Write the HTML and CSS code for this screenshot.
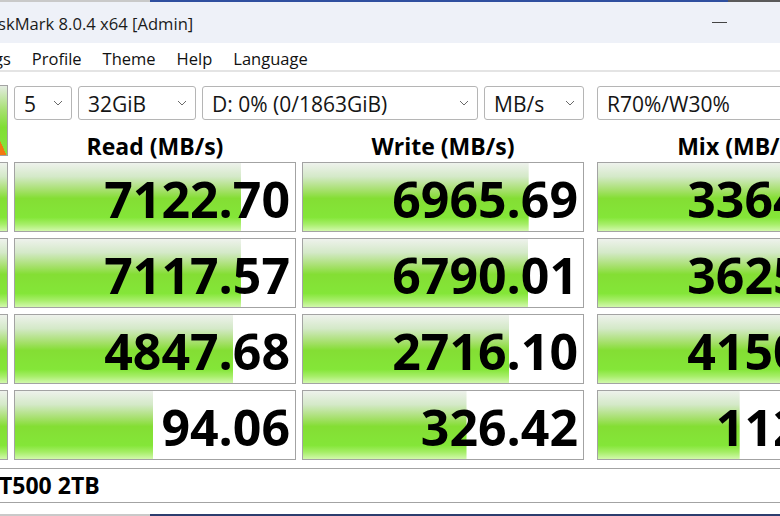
FILE: index.html
```html
<!DOCTYPE html>
<html lang="en">
<head>
    <meta charset="UTF-8">
    <title>CrystalDiskMark 8.0.4 x64 [Admin]</title>
    <link rel="stylesheet" href="styles.css">
</head>
<body>
    <div class="window">
        <div class="edge">
            <span class="seg-grey"></span><span class="seg-blue"></span><span class="seg-dark"></span>
        </div>
        <header class="titlebar">
            <span class="title">skMark 8.0.4 x64 [Admin]</span>
            <span class="min-btn"></span>
        </header>
        <nav class="menubar">
            <span>gs</span>
            <span>Profile</span>
            <span>Theme</span>
            <span>Help</span>
            <span>Language</span>
        </nav>

        <main class="panel">
            <div class="all-btn"></div>
            <div class="combos">
                <div class="combo w-count">5 <svg class="chev" viewBox="0 0 10 6"><polyline points="1,1 5,5 9,1"/></svg></div>
                <div class="combo w-size">32GiB <svg class="chev" viewBox="0 0 10 6"><polyline points="1,1 5,5 9,1"/></svg></div>
                <div class="combo w-drive">D: 0% (0/1863GiB) <svg class="chev" viewBox="0 0 10 6"><polyline points="1,1 5,5 9,1"/></svg></div>
                <div class="combo w-unit">MB/s <svg class="chev" viewBox="0 0 10 6"><polyline points="1,1 5,5 9,1"/></svg></div>
            </div>
            <div class="combo mix">R70%/W30%</div>

            <div class="head">Read (MB/s)</div>
            <div class="head">Write (MB/s)</div>
            <div class="head mix">Mix (MB/s)</div>

            <div class="test-btn"></div>
            <div class="cell" style="--fill: 80.7%">7122.70</div>
            <div class="cell" style="--fill: 80.6%">6965.69</div>
            <div class="cell mix" style="--fill: 75.3%">3364.52</div>

            <div class="test-btn"></div>
            <div class="cell" style="--fill: 80.7%">7117.57</div>
            <div class="cell" style="--fill: 80.4%">6790.01</div>
            <div class="cell mix" style="--fill: 75.9%">3625.91</div>

            <div class="test-btn"></div>
            <div class="cell" style="--fill: 77.9%">4847.68</div>
            <div class="cell" style="--fill: 73.7%">2716.10</div>
            <div class="cell mix" style="--fill: 76.8%">4150.37</div>

            <div class="test-btn"></div>
            <div class="cell" style="--fill: 49.3%">94.06</div>
            <div class="cell" style="--fill: 58.4%">326.42</div>
            <div class="cell mix" style="--fill: 50.6%">112.68</div>
        </main>

        <div class="comment">T500 2TB</div>
        <div class="edge edge-bottom">
            <span class="seg-grey"></span><span class="seg-blue"></span>
        </div>
    </div>
</body>
</html>
```

FILE: styles.css
```css
body {
    margin: 0;
    height: 516px;
    overflow: hidden;
    background: #fff;
    font-family: "Open Sans", "Noto Sans", sans-serif;
    color: #111;
}
.window {
    width: 780px;
    overflow: hidden;
}
.edge {
    display: flex;
    height: 2px;
}
.seg-grey {
    width: 150px;
    background: #c9c9c9;
}
.seg-blue {
    width: 578px;
    background: #2f4f9f;
}
.seg-dark {
    flex: 1;
    background: #5a5a5a;
}
.edge-bottom {
    height: 3px;
    margin-top: 11px;
}
.edge-bottom .seg-blue {
    flex: 1;
    background: #2c3d6e;
}
.titlebar {
    height: 41px;
    display: flex;
    align-items: center;
    justify-content: space-between;
    background: #eef1f8;
}
.title {
    font-size: 16.6px;
    margin-left: -2px;
    padding-top: 1px;
    color: #1b1b1b;
}
.min-btn {
    width: 15px;
    height: 1px;
    background: #444;
    margin-right: 53px;
}
.menubar {
    box-sizing: border-box;
    height: 29px;
    display: flex;
    align-items: center;
    gap: 21px;
    padding-top: 3px;
    font-size: 16.5px;
    border-bottom: 2px solid #e4e4e4;
}
.menubar span:first-child {
    margin-left: -6px;
}
.panel {
    display: grid;
    grid-template-columns: 8px 282px 282px 289px;
    grid-template-rows: 35px 30px repeat(4, 70px);
    column-gap: 6px;
    row-gap: 6px;
    padding-top: 13px;
}
.mix {
    margin-left: 7px;
}
.all-btn {
    grid-row: span 2;
    border: 1px solid #a3a3a3;
    border-left: none;
    background:
        linear-gradient(to top right, #f27812 45%, transparent 46%) left bottom / 100% 16px no-repeat,
        linear-gradient(#e3ece0, #a6e070 35%, #80de34 60%, #86e43c);
}
.combos {
    grid-column: 2 / 4;
    display: flex;
    gap: 6px;
}
.combo {
    box-sizing: border-box;
    height: 34px;
    margin-top: 1px;
    display: flex;
    align-items: center;
    justify-content: space-between;
    padding: 2px 8px 0 9px;
    border: 1px solid #b5b5b5;
    border-radius: 3px;
    font-size: 21px;
    color: #151515;
    background: #fff;
}
.combo .chev {
    margin-top: -2px;
}
.w-count { width: 58px; }
.w-size { width: 118px; }
.w-drive { width: 276px; }
.w-unit { width: 100px; }
.chev {
    width: 10px;
    height: 6px;
    fill: none;
    stroke: #6a6a6a;
    stroke-width: 1;
}
.head {
    align-self: end;
    text-align: center;
    font-size: 23px;
    font-weight: 700;
    line-height: 23px;
    margin-bottom: -2px;
    color: #000;
    white-space: nowrap;
}
.test-btn,
.cell {
    border: 1px solid #a3a3a3;
    background-color: #fff;
    background-image: linear-gradient(#eef2ec, #d4e9c8 20%, #a6e06c 40%, #84de34 52%, #84e638 80%, #a6ee68 90%, #d2f8ac);
    background-repeat: no-repeat;
}
.test-btn {
    border-left: none;
}
.cell {
    box-sizing: border-box;
    background-size: var(--fill) 100%;
    display: flex;
    align-items: center;
    justify-content: flex-end;
    padding: 3px 5px 0 0;
    font-size: 50px;
    font-weight: 700;
    line-height: 1;
    color: #000;
}
.comment {
    box-sizing: border-box;
    height: 35px;
    margin-top: 8px;
    border-top: 1px solid #a3a3a3;
    border-bottom: 1px solid #a3a3a3;
    font-size: 23px;
    font-weight: 700;
    line-height: 33px;
    margin-left: -1px;
    color: #000;
}
```
